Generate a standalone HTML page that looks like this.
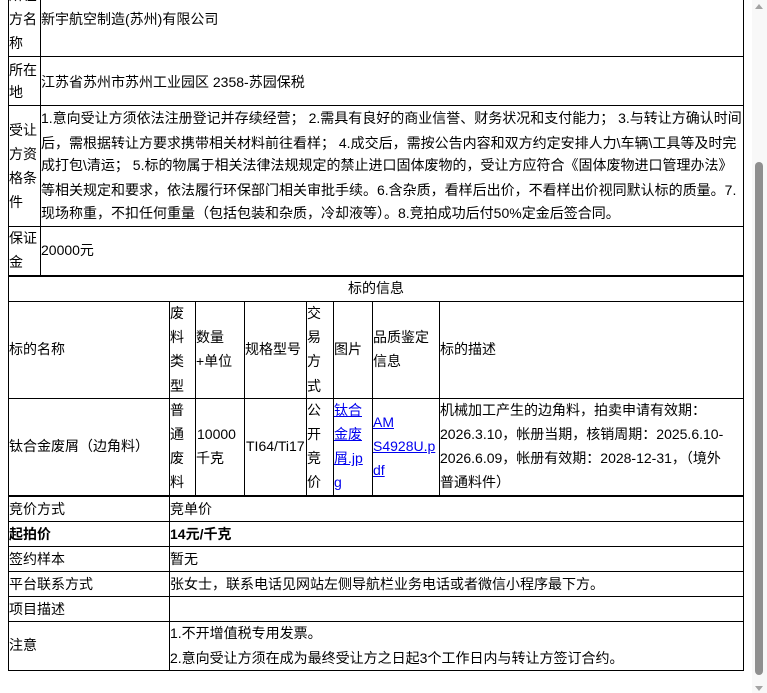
<!DOCTYPE html>
<html><head><meta charset="utf-8"><style>
html,body{margin:0;padding:0;width:767px;height:693px;overflow:hidden;background:#fff;}
body{position:relative;font-family:"Liberation Sans","Noto Sans CJK SC",sans-serif;font-size:14px;color:#000;}
.h{position:absolute;height:1px;background:#000;}
.v{position:absolute;width:1px;background:#000;}
.t{position:absolute;line-height:24px;height:24px;white-space:nowrap;}
a{color:#00e;text-decoration:underline;}
.b{font-weight:bold;}
</style></head><body>
<!-- table 1 -->
<div class="v" style="left:8px;top:0;height:277px"></div>
<div class="v" style="left:40px;top:0;height:276px"></div>
<div class="v" style="left:743px;top:0;height:277px"></div>
<div class="h" style="left:8px;top:56px;width:736px"></div>
<div class="h" style="left:8px;top:105px;width:736px"></div>
<div class="h" style="left:8px;top:226px;width:736px"></div>
<div class="h" style="left:8px;top:275px;width:736px;height:2px"></div>
<div class="t" style="left:9px;top:-17px">所在</div>
<div class="t" style="left:9px;top:7px">方名</div>
<div class="t" style="left:9px;top:31px">称</div>
<div class="t" style="left:41px;top:7px">新宇航空制造(苏州)有限公司</div>
<div class="t" style="left:9px;top:58px">所在</div>
<div class="t" style="left:9px;top:80px">地</div>
<div class="t" style="left:41px;top:70px">江苏省苏州市苏州工业园区 2358-苏园保税</div>
<div class="t" style="left:9px;top:118px">受让</div>
<div class="t" style="left:9px;top:142px">方资</div>
<div class="t" style="left:9px;top:166px">格条</div>
<div class="t" style="left:9px;top:190px">件</div>
<div class="t" style="left:41px;top:106px">1.意向受让方须依法注册登记并存续经营； 2.需具有良好的商业信誉、财务状况和支付能力； 3.与转让方确认时间</div>
<div class="t" style="left:41px;top:131px">后，需根据转让方要求携带相关材料前往看样； 4.成交后，需按公告内容和双方约定安排人力\车辆\工具等及时完</div>
<div class="t" style="left:41px;top:153px">成打包\清运； 5.标的物属于相关法律法规规定的禁止进口固体废物的，受让方应符合《固体废物进口管理办法》</div>
<div class="t" style="left:41px;top:178px">等相关规定和要求，依法履行环保部门相关审批手续。6.含杂质，看样后出价，不看样出价视同默认标的质量。7.</div>
<div class="t" style="left:41px;top:201px">现场称重，不扣任何重量（包括包装和杂质，冷却液等）。8.竞拍成功后付50%定金后签合同。</div>
<div class="t" style="left:9px;top:226px">保证</div>
<div class="t" style="left:9px;top:250px">金</div>
<div class="t" style="left:41px;top:238px">20000元</div>
<!-- table 2 -->
<div class="v" style="left:8px;top:276px;height:221px"></div>
<div class="v" style="left:743px;top:276px;height:221px"></div>
<div class="h" style="left:8px;top:301px;width:736px"></div>
<div class="h" style="left:8px;top:398px;width:736px"></div>
<div class="h" style="left:8px;top:495px;width:736px;height:2px"></div>
<div class="v" style="left:169px;top:301px;height:196px"></div>
<div class="v" style="left:195px;top:301px;height:196px"></div>
<div class="v" style="left:244px;top:301px;height:196px"></div>
<div class="v" style="left:306px;top:301px;height:196px"></div>
<div class="v" style="left:333px;top:301px;height:196px"></div>
<div class="v" style="left:372px;top:301px;height:196px"></div>
<div class="v" style="left:439px;top:301px;height:196px"></div>
<div class="t" style="left:348px;top:276px">标的信息</div>
<div class="t" style="left:9px;top:337px">标的名称</div>
<div class="t" style="left:170px;top:301px">废</div>
<div class="t" style="left:170px;top:325px">料</div>
<div class="t" style="left:170px;top:349px">类</div>
<div class="t" style="left:170px;top:374px">型</div>
<div class="t" style="left:196px;top:325px">数量</div>
<div class="t" style="left:196px;top:349px">+单位</div>
<div class="t" style="left:245px;top:337px">规格型号</div>
<div class="t" style="left:307px;top:301px">交</div>
<div class="t" style="left:307px;top:325px">易</div>
<div class="t" style="left:307px;top:349px">方</div>
<div class="t" style="left:307px;top:374px">式</div>
<div class="t" style="left:334px;top:337px">图片</div>
<div class="t" style="left:373px;top:325px">品质鉴定</div>
<div class="t" style="left:373px;top:349px">信息</div>
<div class="t" style="left:440px;top:337px">标的描述</div>
<div class="t" style="left:9px;top:434px">钛合金废屑（边角料）</div>
<div class="t" style="left:170px;top:398px">普</div>
<div class="t" style="left:170px;top:422px">通</div>
<div class="t" style="left:170px;top:446px">废</div>
<div class="t" style="left:170px;top:470px">料</div>
<div class="t" style="left:197px;top:422px">10000</div>
<div class="t" style="left:196px;top:446px">千克</div>
<div class="t" style="left:246px;top:434px">TI64/Ti17</div>
<div class="t" style="left:307px;top:398px">公</div>
<div class="t" style="left:307px;top:422px">开</div>
<div class="t" style="left:307px;top:446px">竞</div>
<div class="t" style="left:307px;top:470px">价</div>
<div class="t" style="left:334px;top:398px"><a>钛合</a></div>
<div class="t" style="left:334px;top:422px"><a>金废</a></div>
<div class="t" style="left:334px;top:446px"><a>屑.jp</a></div>
<div class="t" style="left:334px;top:470px"><a>g</a></div>
<div class="t" style="left:373px;top:410px"><a>AM</a></div>
<div class="t" style="left:373px;top:434px"><a>S4928U.p</a></div>
<div class="t" style="left:373px;top:458px"><a>df</a></div>
<div class="t" style="left:440px;top:398px">机械加工产生的边角料，拍卖申请有效期：</div>
<div class="t" style="left:440px;top:422px">2026.3.10，帐册当期，核销周期：2025.6.10-</div>
<div class="t" style="left:440px;top:446px">2026.6.09，帐册有效期：2028-12-31，（境外</div>
<div class="t" style="left:440px;top:470px">普通料件）</div>
<!-- table 3 -->
<div class="v" style="left:8px;top:496px;height:175px"></div>
<div class="v" style="left:743px;top:496px;height:175px"></div>
<div class="v" style="left:169px;top:496px;height:175px"></div>
<div class="h" style="left:8px;top:521px;width:736px"></div>
<div class="h" style="left:8px;top:546px;width:736px"></div>
<div class="h" style="left:8px;top:571px;width:736px"></div>
<div class="h" style="left:8px;top:596px;width:736px"></div>
<div class="h" style="left:8px;top:621px;width:736px"></div>
<div class="h" style="left:8px;top:670px;width:736px"></div>
<div class="t" style="left:9px;top:497px">竞价方式</div>
<div class="t" style="left:170px;top:497px">竞单价</div>
<div class="t b" style="left:9px;top:522px">起拍价</div>
<div class="t b" style="left:170px;top:522px">14元/千克</div>
<div class="t" style="left:9px;top:547px">签约样本</div>
<div class="t" style="left:170px;top:547px">暂无</div>
<div class="t" style="left:9px;top:572px">平台联系方式</div>
<div class="t" style="left:170px;top:572px">张女士，联系电话见网站左侧导航栏业务电话或者微信小程序最下方。</div>
<div class="t" style="left:9px;top:597px">项目描述</div>
<div class="t" style="left:9px;top:633px">注意</div>
<div class="t" style="left:170px;top:621px">1.不开增值税专用发票。</div>
<div class="t" style="left:170px;top:646px">2.意向受让方须在成为最终受让方之日起3个工作日内与转让方签订合约。</div>
<!-- scrollbar -->
<div style="position:absolute;left:752px;top:0;width:15px;height:693px;background:#f8f8f8"></div>
<div style="position:absolute;left:755px;top:4px;width:0;height:0;border-left:4px solid transparent;border-right:4px solid transparent;border-bottom:5px solid #a3a3a3"></div>
<div style="position:absolute;left:755px;top:686px;width:0;height:0;border-left:4px solid transparent;border-right:4px solid transparent;border-top:5px solid #a3a3a3"></div>
<div style="position:absolute;left:755px;top:162px;width:8px;height:513px;background:#8f8f8f;border-radius:4px"></div>
</body></html>
